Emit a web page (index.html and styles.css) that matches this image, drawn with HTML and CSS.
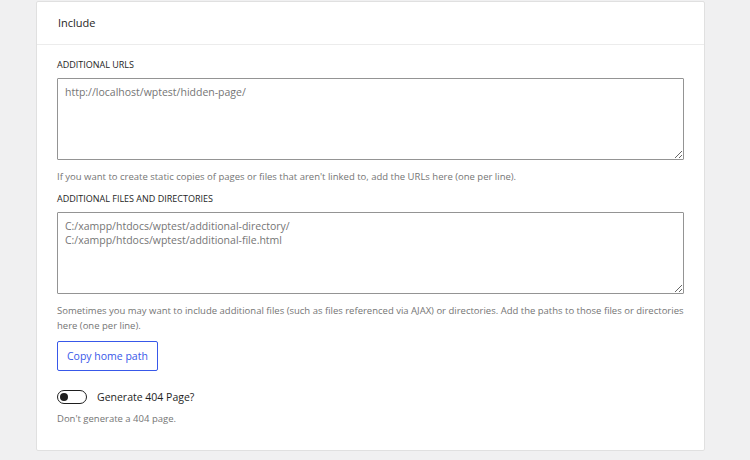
FILE: index.html
```html
<!DOCTYPE html>
<html lang="en">
<head>
    <meta charset="UTF-8">
    <title>Include</title>
    <link rel="stylesheet" href="styles.css">
</head>
<body>
    <div class="card">
        <div class="card-header">Include</div>
        <div class="card-body">
            <div class="field">
                <label class="field-label" for="urls">Additional URLs</label>
                <textarea id="urls" class="field-input" rows="4" placeholder="http://localhost/wptest/hidden-page/"></textarea>
                <p class="help">If you want to create static copies of pages or files that aren't linked to, add the URLs here (one per line).</p>
            </div>

            <div class="field">
                <label class="field-label" for="files">Additional Files and Directories</label>
                <textarea id="files" class="field-input" rows="4" placeholder="C:/xampp/htdocs/wptest/additional-directory/&#10;C:/xampp/htdocs/wptest/additional-file.html"></textarea>
                <p class="help">Sometimes you may want to include additional files (such as files referenced via AJAX) or directories. Add the paths to those files or directories here (one per line).</p>
            </div>

            <button class="btn-secondary" type="button">Copy home path</button>

            <div class="toggle-row">
                <span class="toggle"><span class="toggle-thumb"></span></span>
                <span class="toggle-label">Generate 404 Page?</span>
            </div>
            <p class="help">Don't generate a 404 page.</p>
        </div>
    </div>
</body>
</html>
```

FILE: styles.css
```css
html, body {
    margin: 0;
}

body {
    background: #f0f0f1;
    font-family: "Open Sans", "Noto Sans", sans-serif;
    color: #1e1e1e;
    padding: 1px 0 0 36px;
}

.card {
    width: 667px;
    background: #fff;
    border: 1px solid #e0e0e0;
    border-radius: 2px;
}

.card-header {
    height: 42px;
    line-height: 42px;
    padding: 0 21px;
    font-size: 11px;
    border-bottom: 1px solid #ececec;
}

.card-body {
    padding: 13px 20px 24px;
}

.field {
    margin-bottom: 8px;
}

.field-label {
    display: block;
    font-size: 9px;
    text-transform: uppercase;
    line-height: 14px;
    margin-bottom: 6px;
}

.field-input {
    display: block;
    box-sizing: border-box;
    width: 627px;
    height: 82px;
    margin: 0;
    padding: 6px 7px;
    border: 1px solid #949494;
    border-radius: 1px;
    font-family: inherit;
    font-size: 10.5px;
    line-height: 14px;
    color: #757575;
}

.field-input::placeholder {
    color: #757575;
}

.help {
    margin: 9px 0 0;
    font-size: 9.5px;
    line-height: 15px;
    color: #757575;
}

.btn-secondary {
    display: block;
    margin-top: 8px;
    height: 30px;
    padding: 0 9px;
    background: #fff;
    border: 1px solid #3858e9;
    border-radius: 2px;
    color: #3858e9;
    font-family: inherit;
    font-size: 10.5px;
}

.toggle-row {
    display: flex;
    align-items: center;
    gap: 10px;
    margin-top: 19px;
}

.toggle {
    position: relative;
    box-sizing: border-box;
    width: 30px;
    height: 14px;
    border: 1px solid #1e1e1e;
    border-radius: 7px;
}

.toggle-thumb {
    position: absolute;
    top: 2px;
    left: 2px;
    width: 8px;
    height: 8px;
    border-radius: 50%;
    background: #1e1e1e;
}

.toggle-label {
    font-size: 10.5px;
}

.toggle-row + .help {
    margin-top: 7px;
}
```
